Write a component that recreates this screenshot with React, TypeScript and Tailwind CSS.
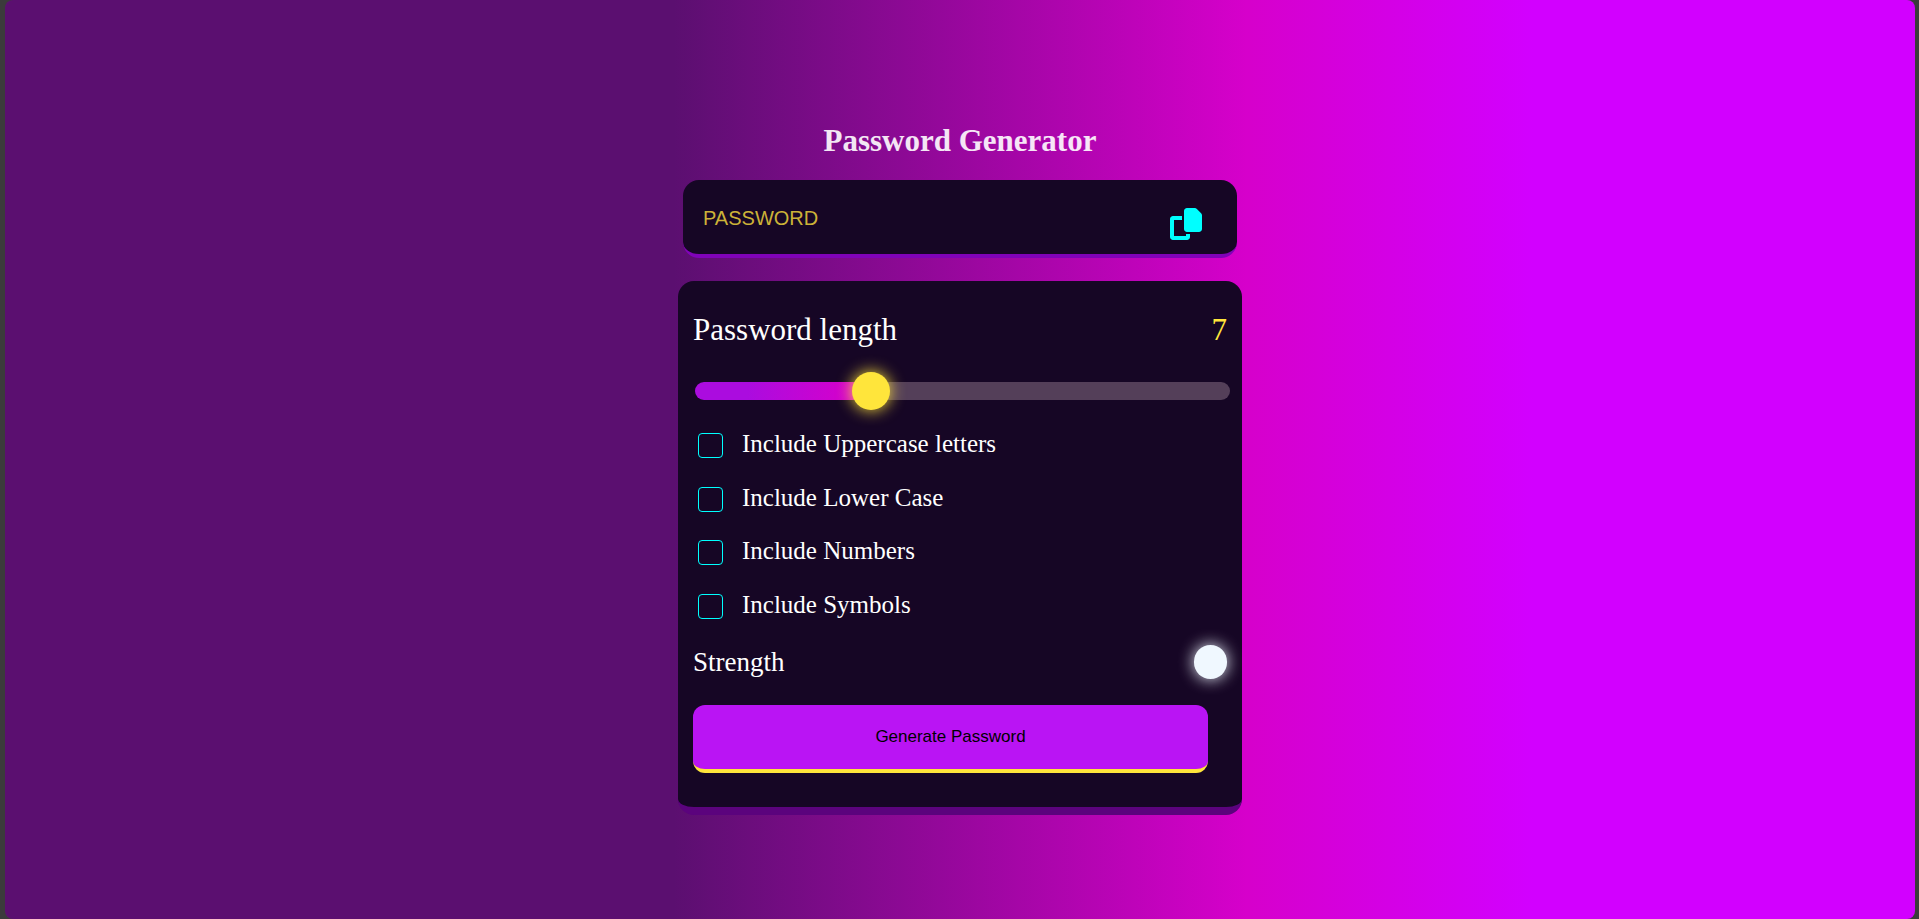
import { useState } from "react";

const OPTIONS = [
  { id: "uppercase", label: "Include Uppercase letters" },
  { id: "lowercase", label: "Include Lower Case" },
  { id: "numbers", label: "Include Numbers" },
  { id: "symbols", label: "Include Symbols" },
];

const MIN = 1;
const MAX = 20;
const THUMB = 38;

function CopyIcon() {
  return (
    <svg viewBox="0 0 512 512" className="size-8 fill-current" aria-hidden="true">
      <path d="M272 0H396.1c12.7 0 24.9 5.1 33.9 14.1l67.9 67.9c9 9 14.1 21.2 14.1 33.9V336c0 26.5-21.5 48-48 48H272c-26.5 0-48-21.5-48-48V48c0-26.5 21.5-48 48-48zM48 128H192v64H64V448H256V416h64v48c0 26.5-21.5 48-48 48H48c-26.5 0-48-21.5-48-48V176c0-26.5 21.5-48 48-48z" />
    </svg>
  );
}

export default function App() {
  const [length, setLength] = useState(7);
  const ratio = (length - MIN) / (MAX - MIN);
  const fill = `calc(${THUMB / 2}px + (100% - ${THUMB}px) * ${ratio})`;

  return (
    <div className="flex min-h-screen bg-[#3b3b3b] pl-[5px] pr-1 font-['Liberation_Serif',serif]">
      <main className="flex flex-1 flex-col items-center rounded-lg bg-[linear-gradient(90deg,#5b0f70_35%,#d600cb_65%,#d200ff_80%)] pt-[123px]">
        <h1 className="text-[31px] leading-9 font-bold text-white/90">Password Generator</h1>

        <div className="mt-[21px] flex w-full max-w-[554px] items-center rounded-2xl border-b-4 border-[#8003b8] bg-[#160625] pr-[35px] pl-5">
          <input
            type="text"
            readOnly
            aria-label="Password"
            placeholder="PASSWORD"
            className="h-[74px] min-w-0 flex-1 bg-transparent pt-0.5 font-['Liberation_Sans',sans-serif] text-xl text-[#ffe53b] outline-none placeholder:text-[#ccb238]"
          />
          <button type="button" aria-label="Copy password" className="mt-3.5 text-[#00ffff]">
            <CopyIcon />
          </button>
        </div>

        <section className="mt-[23px] w-full max-w-[564px] rounded-2xl border-b-8 border-[#5b037d] bg-[#160625] px-[15px] pt-[31px] pb-[34px] text-white">
          <div className="flex items-center justify-between text-[31px] leading-9">
            <label htmlFor="length">Password length</label>
            <output htmlFor="length" className="text-[#ffe53b]">{length}</output>
          </div>

          <div className="mt-[34px] flex pl-0.5">
            <input
              id="length"
              type="range"
              min={MIN}
              max={MAX}
              value={length}
              onChange={(e) => setLength(Number(e.target.value))}
              style={{
                backgroundImage: `linear-gradient(90deg, #ab0cdf calc(${fill} * 0.3), #d600cb calc(${fill} * 0.9), #d600cb ${fill}, #543f59 ${fill})`,
              }}
              className="-mr-[3px] h-[18px] flex-1 cursor-pointer appearance-none rounded-full [&::-webkit-slider-thumb]:size-[38px] [&::-webkit-slider-thumb]:appearance-none [&::-webkit-slider-thumb]:rounded-full [&::-webkit-slider-thumb]:bg-[#ffe53b] [&::-webkit-slider-thumb]:shadow-[0_0_16px_#ffe53b]"
            />
          </div>

          <div className="mt-[19px] grid h-[214px] grid-rows-4">
            {OPTIONS.map(({ id, label }) => (
              <div key={id} className="flex items-center gap-[19px] pl-[5px]">
                <input
                  id={id}
                  type="checkbox"
                  className="size-[25px] appearance-none rounded-sm border border-[#00ffff] checked:bg-[#00ffff]"
                />
                <label htmlFor={id} className="pb-[3px] text-[25px] leading-7">{label}</label>
              </div>
            ))}
          </div>

          <div className="mt-3 flex items-center justify-between">
            <span className="text-[27px] leading-8">Strength</span>
            <span className="h-[34px] w-[33px] rounded-full bg-[#f0f8ff] shadow-[0_0_16px_#f0f8ff]" />
          </div>

          <div className="mt-[26px] pr-[19px]">
            <button
              type="button"
              className="h-[68px] w-full rounded-xl border-b-4 border-[#ffe53b] bg-[#ba14f4] font-['Liberation_Sans',sans-serif] text-[17px] text-black"
            >
              Generate Password
            </button>
          </div>
        </section>
      </main>
    </div>
  );
}
